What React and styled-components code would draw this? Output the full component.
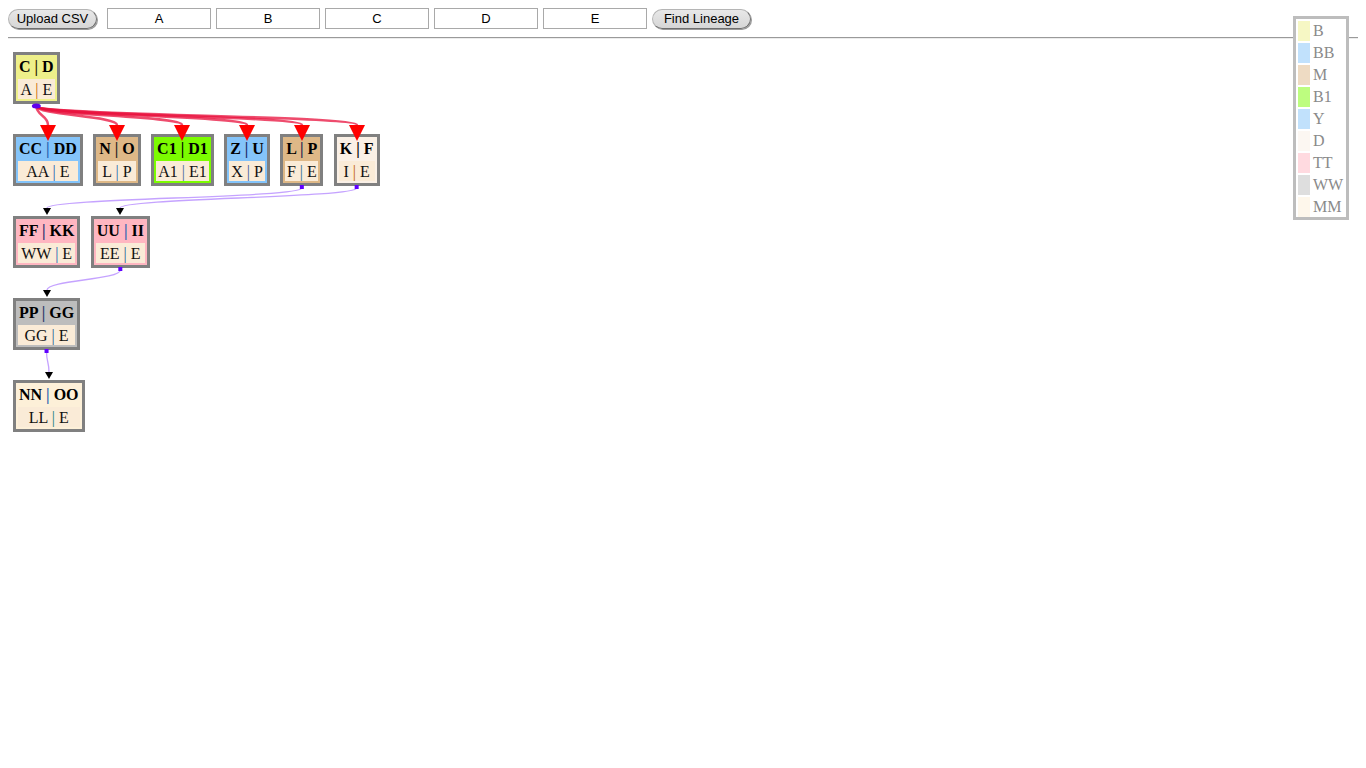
import React, { useLayoutEffect, useRef, useState } from 'react';
import styled, { createGlobalStyle } from 'styled-components';

const Global = createGlobalStyle`
  body {
    margin: 8px;
    background: #fff;
    font-family: "Liberation Sans", Arial, sans-serif;
  }
`;

const Toolbar = styled.div`
  display: flex;
  align-items: center;
  gap: 5px;
  height: 21px;
`;

const PillButton = styled.button`
  width: ${props => props.$w}px;
  height: 20px;
  padding: 0;
  margin-right: ${props => props.$spaced ? '5px' : '0'};
  border: 1px solid #b5b5b5;
  border-right-color: #6e6e6e;
  border-bottom-color: #6e6e6e;
  border-radius: 10px;
  background: linear-gradient(#e8e8e8, #d6d6d6);
  box-shadow: 1px 1px 0 #9a9a9a;
  font-family: "Liberation Sans", Arial, sans-serif;
  font-size: 13px;
  color: #000;
  line-height: 18px;
  cursor: pointer;
`;

const Field = styled.input`
  box-sizing: border-box;
  width: 104px;
  height: 21px;
  border: 1px solid #a9a9a9;
  padding: 0;
  text-align: center;
  font-family: "Liberation Sans", Arial, sans-serif;
  font-size: 13px;
  color: #000;
  outline: none;
`;

const Rule = styled.div`
  margin-top: 8px;
  border-top: 1px solid #9a9a9a;
  border-bottom: 1px solid #ececec;
`;

const Graph = styled.div`
  position: relative;
  display: flex;
  flex-direction: column;
  gap: 30px;
  margin-top: 13px;
  padding-left: 5px;
`;

const Level = styled.div`
  display: flex;
  align-items: flex-start;
  gap: 10.4px;
`;

const NodeBox = styled.div`
  display: inline-flex;
  flex-direction: column;
  border: 3px solid #808080;
  background: ${props => props.$bg};
  padding: 0 2px 2px;
  font-family: "Liberation Serif", "Times New Roman", serif;
  font-size: 16px;
  color: #000;
`;

const Head = styled.div`
  height: 22px;
  line-height: 23px;
  margin-bottom: 2px;
  padding: 0 1px;
  font-weight: bold;
  text-align: center;
  white-space: pre;
`;

const Body = styled.div`
  height: 20px;
  line-height: 21px;
  padding: 0 1px;
  background: #faebd7;
  text-align: center;
  white-space: pre;
  color: #111;
`;

const Sep = styled.span`
  color: ${props => props.$color};
`;

const Edges = styled.svg`
  position: absolute;
  left: 0;
  top: 0;
  width: 100%;
  height: 100%;
  overflow: visible;
  pointer-events: none;
`;

const Legend = styled.div`
  position: absolute;
  top: 16px;
  right: 17px;
  box-sizing: border-box;
  width: 56px;
  padding: 2px 2px 0;
  border: 3px solid #bdbdbd;
  background: #fff;
  display: flex;
  flex-direction: column;
  gap: 2px;
`;

const LegendRow = styled.div`
  display: flex;
  align-items: center;
  gap: 3px;
  height: 20px;
  font-family: "Liberation Serif", "Times New Roman", serif;
  font-size: 16px;
  color: #8a8a8a;
`;

const Swatch = styled.span`
  width: 12px;
  height: 20px;
  background: ${props => props.$bg};
  opacity: 0.5;
`;

const COLORS = {
  B: '#eef08a',
  BB: '#84c4fa',
  M: '#deb887',
  B1: '#7cfc00',
  Y: '#84c4fa',
  D: '#faf0e6',
  TT: '#ffb6c1',
  WW: '#bdbdbd',
  MM: '#fdf0d8',
};

const levels = [
  [{ id: 'cd', h: ['C', 'D'], b: ['A', 'E'], c: 'B', hs: '#2b2200', bs: '#c86400' }],
  [
    { id: 'ccdd', h: ['CC', 'DD'], b: ['AA', 'E'], c: 'BB', hs: '#1f5fb0', bs: '#1f5fb0' },
    { id: 'no', h: ['N', 'O'], b: ['L', 'P'], c: 'M', hs: '#222', bs: '#2a6ab0' },
    { id: 'c1d1', h: ['C1', 'D1'], b: ['A1', 'E1'], c: 'B1', hs: '#000', bs: '#4a6a9a' },
    { id: 'zu', h: ['Z', 'U'], b: ['X', 'P'], c: 'Y', hs: '#1a2a6a', bs: '#3a5a9a' },
    { id: 'lp', h: ['L', 'P'], b: ['F', 'E'], c: 'M', hs: '#1a2050', bs: '#2a7090' },
    { id: 'kf', h: ['K', 'F'], b: ['I', 'E'], c: 'D', hs: '#000', bs: '#c06000' },
  ],
  [
    { id: 'ffkk', h: ['FF', 'KK'], b: ['WW', 'E'], c: 'TT', hs: '#1a2a6a', bs: '#1f60b0' },
    { id: 'uuii', h: ['UU', 'II'], b: ['EE', 'E'], c: 'TT', hs: '#1f60b0', bs: '#1f6090' },
  ],
  [{ id: 'ppgg', h: ['PP', 'GG'], b: ['GG', 'E'], c: 'WW', hs: '#2a3a6a', bs: '#1f6090' }],
  [{ id: 'nnoo', h: ['NN', 'OO'], b: ['LL', 'E'], c: 'MM', hs: '#1f60b0', bs: '#1a8080' }],
];

const links = [
  ['cd', 'ccdd', 'red'],
  ['cd', 'no', 'red'],
  ['cd', 'c1d1', 'red'],
  ['cd', 'zu', 'red'],
  ['cd', 'lp', 'red'],
  ['cd', 'kf', 'red'],
  ['lp', 'ffkk', 'thin'],
  ['kf', 'uuii', 'thin'],
  ['uuii', 'ppgg', 'thin'],
  ['ppgg', 'nnoo', 'thin'],
];

const Node = React.forwardRef(({ node }, ref) => (
  <NodeBox ref={ref} $bg={COLORS[node.c]}>
    <Head>
      {node.h[0]} <Sep $color={node.hs}>|</Sep> {node.h[1]}
    </Head>
    <Body>
      {node.b[0]} <Sep $color={node.bs}>|</Sep> {node.b[1]}
    </Body>
  </NodeBox>
));

const curve = (sx, sy, tx, ty) => {
  const my = (sy + ty) / 2;
  return `M${sx},${sy} C${sx},${my} ${tx},${my} ${tx},${ty}`;
};

const App = () => {
  const graphRef = useRef(null);
  const nodeRefs = useRef({});
  const [boxes, setBoxes] = useState({});

  useLayoutEffect(() => {
    const origin = graphRef.current.getBoundingClientRect();
    const next = {};
    Object.entries(nodeRefs.current).forEach(([id, el]) => {
      const r = el.getBoundingClientRect();
      next[id] = {
        cx: r.left - origin.left + r.width / 2,
        top: r.top - origin.top,
        bottom: r.bottom - origin.top,
      };
    });
    setBoxes(next);
  }, []);

  const ready = Object.keys(boxes).length > 0;

  return (
    <>
      <Global />
      <Toolbar>
        <PillButton $spaced $w={89}>Upload CSV</PillButton>
        {['A', 'B', 'C', 'D', 'E'].map(v => (
          <Field key={v} defaultValue={v} />
        ))}
        <PillButton $w={99}>Find Lineage</PillButton>
      </Toolbar>
      <Rule />

      <Graph ref={graphRef}>
        {levels.map((row, i) => (
          <Level key={i}>
            {row.map(n => (
              <Node key={n.id} node={n} ref={el => (nodeRefs.current[n.id] = el)} />
            ))}
          </Level>
        ))}

        {ready && (
          <Edges>
            {links.map(([from, to, kind]) => {
              const s = boxes[from];
              const t = boxes[to];
              const tx = Math.round(t.cx);
              if (kind === 'red') {
                const sy = s.bottom + 2;
                const ty = t.top - 9;
                return (
                  <g key={from + to}>
                    <path d={curve(s.cx, sy, tx, ty)} fill="none" stroke="#e8103c" strokeOpacity="0.75" strokeWidth="2.5" />
                    <polygon points={`${tx - 8},${ty} ${tx + 8},${ty} ${tx},${t.top + 7}`} fill="#ff0000" />
                  </g>
                );
              }
              const sy = s.bottom + 2;
              const ty = t.top - 8;
              return (
                <g key={from + to}>
                  <path d={curve(s.cx, sy, tx, ty)} fill="none" stroke="#b68cff" strokeOpacity="0.8" strokeWidth="1.3" />
                  <rect x={s.cx - 2} y={s.bottom - 1} width="4" height="4" fill="#6000ff" />
                  <polygon points={`${tx - 4},${ty} ${tx + 4},${ty} ${tx},${t.top - 1}`} fill="#000" />
                </g>
              );
            })}
            {boxes.cd && (
              <ellipse cx={boxes.cd.cx} cy={boxes.cd.bottom + 2} rx="4.5" ry="2.5" fill="#6000ee" />
            )}
          </Edges>
        )}
      </Graph>

      <Legend>
        {Object.entries(COLORS).map(([k, c]) => (
          <LegendRow key={k}>
            <Swatch $bg={c} />
            {k}
          </LegendRow>
        ))}
      </Legend>
    </>
  );
};

export default App;
